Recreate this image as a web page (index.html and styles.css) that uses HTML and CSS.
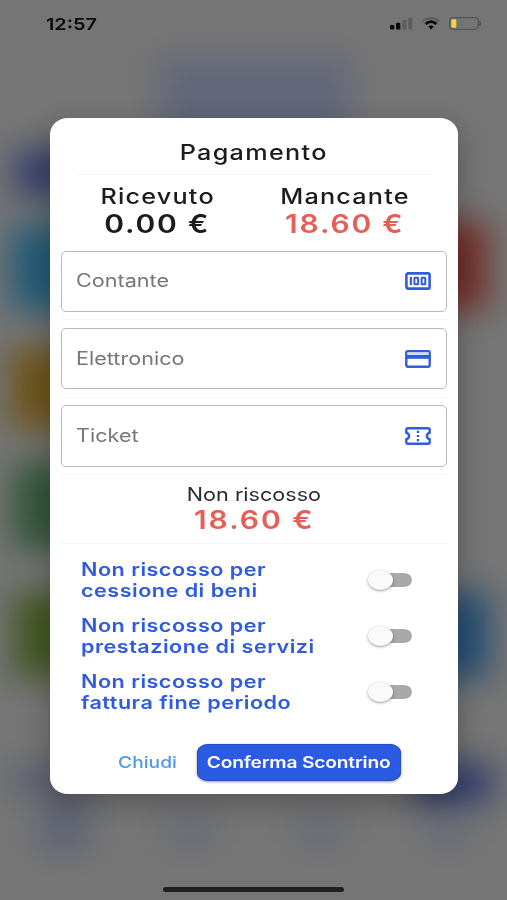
FILE: index.html
```html
<!DOCTYPE html>
<html lang="it">
<head>
<meta charset="utf-8">
<title>Pagamento</title>
<link rel="stylesheet" href="styles.css">
</head>
<body>
<div class="screen">
  <svg class="backdrop" viewBox="0 0 507 900" aria-hidden="true">
    <defs><filter id="soft" filterUnits="userSpaceOnUse" x="-60" y="-60" width="627" height="1020" color-interpolation-filters="sRGB"><feGaussianBlur stdDeviation="16"/></filter></defs>
    <g filter="url(#soft)">
      <rect x="-60" y="-60" width="627" height="1020" fill="#757575"/>
      <rect x="160" y="58" width="188" height="100" fill="#62667a"/>
      <rect x="14" y="150" width="70" height="46" fill="#353f6c"/>
      <rect x="10" y="225" width="80" height="86" fill="#245b76"/>
      <rect x="10" y="347" width="80" height="82" fill="#6e551c"/>
      <rect x="12" y="463" width="80" height="86" fill="#34563b"/>
      <rect x="12" y="592" width="80" height="86" fill="#445725"/>
      <rect x="420" y="222" width="68" height="88" fill="#722f28"/>
      <rect x="420" y="592" width="70" height="86" fill="#264e73"/>
      <rect x="415" y="764" width="78" height="38" fill="#303b6c"/>
      <rect x="12" y="765" width="78" height="30" fill="#5a6072"/>
      <rect x="42" y="805" width="45" height="45" fill="#5c6174"/>
      <rect x="165" y="815" width="50" height="30" fill="#686b76"/>
      <rect x="295" y="815" width="50" height="30" fill="#686b76"/>
      <rect x="425" y="815" width="45" height="30" fill="#686b76"/>
    </g>
  </svg>

  <header class="status">
    <span class="wide time">12:57</span>
    <div class="status-icons">
      <svg width="23" height="13" viewBox="0 0 23 13"><g fill="#080808"><rect x="0" y="8" width="4.3" height="4.4" rx="1.2"/><rect x="6" y="5.8" width="4.3" height="6.6" rx="1.2"/></g><g fill="#5d5d5d"><rect x="12.3" y="3" width="4" height="9.4" rx="1.2"/><rect x="18.3" y=".8" width="4" height="11.6" rx="1.2"/></g></svg>
      <svg width="18" height="13" viewBox="0 0 18 13" fill="none"><path d="M.8 4.2Q9-2.3 17.2 4.2" stroke="#5b5b5b" stroke-width="2"/><path d="M3.5 7Q9 2.4 14.5 7" stroke="#080808" stroke-width="2.6"/><path d="M6.2 9.6Q9 7.6 11.8 9.6L9 12.4Z" fill="#080808"/></svg>
      <svg width="33" height="13" viewBox="0 0 33 13"><rect x=".7" y=".7" width="28.6" height="11.6" rx="3.2" fill="none" stroke="#555" stroke-width="1.2"/><rect x="2.3" y="2.2" width="5" height="8.6" rx="1.2" fill="#f6cf4d"/><path d="M30.8 4.5Q32.6 6.5 30.8 8.5Z" fill="#505050" stroke="#505050"/></svg>
    </div>
  </header>

  <main class="dialog">
    <h1 class="title"><span class="wide">Pagamento</span></h1>
    <hr class="rule short">
    <section class="totals">
      <div class="total"><span class="wide caption">Ricevuto</span><span class="wide amount">0.00 €</span></div>
      <div class="total"><span class="wide caption">Mancante</span><span class="wide amount due">18.60 €</span></div>
    </section>

    <div class="field"><span class="wide left">Contante</span>
      <svg class="icon" viewBox="0 0 26 18" fill="none" stroke="#315ddd"><rect x="1.4" y="1.4" width="23.2" height="15.2" rx="1.6" stroke-width="2.6"/><path d="M5.9 5V13" stroke-width="2.2"/><rect x="9.4" y="5.8" width="3.7" height="6.4" rx=".5" stroke-width="2"/><rect x="16.6" y="5.8" width="3.7" height="6.4" rx=".5" stroke-width="2"/></svg>
    </div>
    <hr class="rule mid">
    <div class="field"><span class="wide left">Elettronico</span>
      <svg class="icon" viewBox="0 0 26 18"><rect x="1.3" y="1.3" width="23.4" height="15.4" rx="1.6" fill="#fff" stroke="#315ddd" stroke-width="2.4"/><path d="M2.3 2.3H23.7V5H2.3Z" fill="#cfdcfa"/><path d="M1 5H25V8.8H1Z" fill="#315ddd"/></svg>
    </div>
    <hr class="rule mid">
    <div class="field"><span class="wide left">Ticket</span>
      <svg class="icon" viewBox="0 0 26 18" fill="none" stroke="#315ddd" stroke-width="2.4"><path d="M3 1.3H23Q24.7 1.3 24.7 2.8V5.7C21 7 21 11 24.7 12.3V15.2Q24.7 16.7 23 16.7H3Q1.3 16.7 1.3 15.2V12.3C5 11 5 7 1.3 5.7V2.8Q1.3 1.3 3 1.3Z"/><path d="M13 3.8V5.9M13 7.9V10.1M13 12.1V14.2"/></svg>
    </div>
    <hr class="rule after">

    <section class="unpaid"><span class="wide unpaid-label">Non riscosso</span><span class="wide amount due">18.60 €</span></section>
    <hr class="rule">

    <section class="options">
      <div class="option"><span class="wide left">Non riscosso per<br>cessione di beni</span><span class="switch"></span></div>
      <div class="option"><span class="wide left">Non riscosso per<br>prestazione di servizi</span><span class="switch"></span></div>
      <div class="option"><span class="wide left">Non riscosso per<br>fattura fine periodo</span><span class="switch"></span></div>
    </section>

    <footer class="actions">
      <button class="close"><span class="wide">Chiudi</span></button>
      <button class="confirm"><span class="wide">Conferma Scontrino</span></button>
    </footer>
  </main>
  <div class="home-bar"></div>
</div>
</body>
</html>
```
FILE: styles.css
```css
* { box-sizing: border-box; }
body { margin: 0; font-family: Inter, "Liberation Sans", sans-serif; }
.screen { position: relative; width: 507px; height: 900px; overflow: hidden; background: #757575; display: flex; flex-direction: column; align-items: center; }
.backdrop { position: absolute; inset: 0; width: 507px; height: 900px; }
.wide { display: inline-block; white-space: nowrap; transform: scaleX(1.2); }
.left, .time { transform-origin: left center; }

.status { position: relative; width: 100%; height: 117.5px; padding: 14px 25px 0 46px; display: flex; justify-content: space-between; align-items: flex-start; }
.time { font-size: 16.5px; line-height: 20px; font-weight: 600; color: #090909; }
.status-icons { display: flex; gap: 9px; padding-top: 3px; }

.dialog { position: relative; width: 408px; height: 676px; margin-left: 1px; padding: 0 11px; flex: none; border-radius: 18px / 16px; background: #fff; box-shadow: 0 9px 26px 2px rgba(0, 0, 0, .24); color: #1c1c1e; }
.title { margin: 0; height: 56px; padding-top: 22.5px; text-align: center; font-size: 21px; line-height: 26px; font-weight: 500; letter-spacing: 1.1px; }
.rule { margin: 0; border: 0; height: 1px; background: #f4f4f4; }
.short { margin: 0 15px; }
.mid { margin: 7.6px 0; }
.after { margin-top: 7px; }
.totals { height: 76px; padding: 8px 9px 0 3px; display: grid; grid-template-columns: 1fr 1fr; }
.total, .unpaid { display: flex; flex-direction: column; align-items: center; }
.caption { font-size: 21px; line-height: 27.5px; font-weight: 500; letter-spacing: 1px; }
.amount { font-size: 25px; line-height: 29px; font-weight: 600; letter-spacing: 1.5px; }
.due { color: #e75d57; }
.field { height: 61.3px; padding: 0 15.5px 0 14px; border: 1.5px solid #bababa; border-radius: 5px; display: flex; justify-content: space-between; align-items: center; font-size: 18px; line-height: 24px; color: #77777a; }
.icon { width: 26px; height: 18px; }
.unpaid { height: 68px; padding-top: 8px; }
.unpaid-label { font-size: 18px; line-height: 23px; color: #2c2c2e; }
.unpaid .amount { line-height: 28px; letter-spacing: 1.65px; }
.options { padding: 15px 35px 0 20px; }
.option { height: 56.2px; display: flex; justify-content: space-between; align-items: flex-start; color: #2e5be0; font-size: 18px; line-height: 21px; font-weight: 600; letter-spacing: .4px; }
.switch { position: relative; width: 43px; height: 14px; margin-top: 14px; border-radius: 8px / 7px; background: linear-gradient(90deg, transparent 10px, #a9a9a9 10px); }
.switch::before { content: ""; position: absolute; left: -1px; top: -3px; width: 25px; height: 20px; border-radius: 50%; background: #fafafa; box-shadow: 0 1px 3px rgba(0, 0, 0, .4); }
.actions { display: flex; align-items: center; padding: 16.4px 46.5px 0 36px; justify-content: flex-end; }
button { border: 0; padding: 0; background: none; font: 500 16px/20px Inter, "Liberation Sans", sans-serif; text-align: center; }
.close { width: 101px; color: #4f9ae5; }
.confirm { width: 205px; height: 37px; border-radius: 11px / 9px; background: #2b5be3; color: #fff; font-weight: 600; letter-spacing: -.15px; box-shadow: 0 1px 3px rgba(0, 0, 0, .4), inset 0 0 0 1px #244fc5; }
.home-bar { position: relative; width: 181px; height: 5px; margin-top: 93px; border-radius: 3px; background: #202020; }
```
